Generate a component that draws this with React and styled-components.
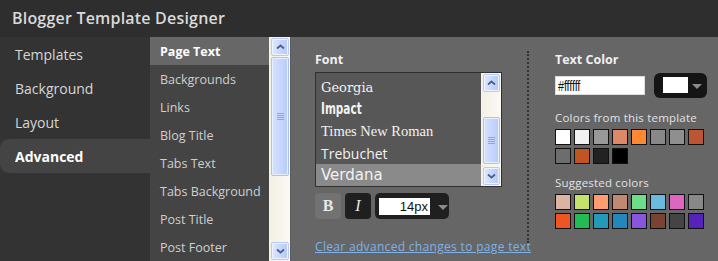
import React from 'react';
import styled, { createGlobalStyle } from 'styled-components';

const Global = createGlobalStyle`
  html, body { margin: 0; padding: 0; background: #313131; }
  body { font-family: "Open Sans", "DejaVu Sans", sans-serif; }
  * { box-sizing: border-box; }
`;

const Page = styled.div`
  width: 718px;
  height: 261px;
  overflow: hidden;
  background: #323232;
  display: flex;
  flex-direction: column;
`;

const Header = styled.header`
  height: 37px;
  flex: none;
  display: flex;
  align-items: center;
  padding: 0 0 2px 12px;
  color: #dadada;
  font-size: 16px;
  font-weight: 600;
  letter-spacing: 0.2px;
  background: #2e2e2e;
`;

const Body = styled.div`
  flex: 1;
  display: flex;
  min-height: 0;
`;

const Nav = styled.nav`
  width: 150px;
  flex: none;
  background: #333;
  display: flex;
  flex-direction: column;
`;

const NavItem = styled.div`
  height: 34px;
  display: flex;
  align-items: center;
  padding-left: 15px;
  font-size: 14px;
  color: ${p => (p.$active ? '#fff' : '#d6d6d6')};
  font-weight: ${p => (p.$active ? 700 : 400)};
  background: ${p => (p.$active ? '#444' : 'transparent')};
  border-radius: 9px 0 0 9px;
`;

const SubPanel = styled.div`
  flex: none;
  display: flex;
  background: #444;
`;

const SubList = styled.ul`
  list-style: none;
  margin: 0;
  padding: 0;
  width: 119px;
`;

const SubItem = styled.li`
  height: 28px;
  display: flex;
  align-items: center;
  padding-left: 10px;
  font-size: 12.5px;
  white-space: nowrap;
  color: ${p => (p.$active ? '#fff' : '#cfcfcf')};
  font-weight: ${p => (p.$active ? 700 : 400)};
  background: ${p => (p.$active ? '#676767' : 'transparent')};
`;

/* XP style scrollbar */
const ScrollBar = styled.div`
  width: ${p => p.$w}px;
  flex: none;
  display: flex;
  flex-direction: column;
  background: linear-gradient(to right, #f3f0e6, #fbf9f3);
  border-left: 1px solid #f4f4f4;
`;

const ScrollBtn = styled.div`
  height: 18px;
  flex: none;
  margin: ${p => (p.$down ? '0 1px 1px' : '1px 1px 0')};
  border: 1px solid #b9cbf3;
  border-radius: 2px;
  background: linear-gradient(to right, #dfe8ff, #c3d4fd 60%, #b7c9f6);
  box-shadow: inset 0 0 0 1px #eef3ff;
  display: flex;
  align-items: center;
  justify-content: center;
`;

const Thumb = styled.div`
  flex: none;
  height: ${p => p.$h}px;
  margin: ${p => p.$top}px 1px 0;
  border: 1px solid #aec2f2;
  border-radius: 2px;
  background: linear-gradient(to right, #d5e1fe, #c4d4fd 60%, #b8caf7);
  box-shadow: inset 0 0 0 1px #e8efff;
  display: flex;
  align-items: center;
  justify-content: center;
`;

const Spacer = styled.div`
  flex: 1;
`;

const Arrow = ({ down }) => (
  <svg width="9" height="6" viewBox="0 0 9 6">
    <path
      d={down ? 'M1 1.5 L4.5 4.5 L8 1.5' : 'M1 4.5 L4.5 1.5 L8 4.5'}
      fill="none"
      stroke="#4d6185"
      strokeWidth="1.8"
    />
  </svg>
);

const Grip = () => (
  <svg width="7" height="8" viewBox="0 0 7 8">
    {[0.5, 2.5, 4.5, 6.5].map(y => (
      <line key={y} x1="0" x2="7" y1={y} y2={y} stroke="#8ea6dc" strokeWidth="1" />
    ))}
  </svg>
);

const Scroller = ({ w, thumbTop, thumbH }) => (
  <ScrollBar $w={w}>
    <ScrollBtn>
      <Arrow />
    </ScrollBtn>
    <Thumb $top={thumbTop} $h={thumbH}>
      <Grip />
    </Thumb>
    <Spacer />
    <ScrollBtn $down>
      <Arrow down />
    </ScrollBtn>
  </ScrollBar>
);

const Main = styled.main`
  flex: 1;
  display: flex;
  background: #666;
  padding: 14px 0 0 24px;
  border-left: 1px solid #5c5c5c;
`;

const FontCol = styled.section`
  width: 212px;
  flex: none;
  display: flex;
  flex-direction: column;
`;

const Label = styled.div`
  height: ${p => p.$h || 22}px;
  display: flex;
  align-items: ${p => (p.$bottom ? 'flex-end' : 'center')};
  padding-bottom: ${p => (p.$bottom ? 4 : 0)}px;
  font-size: ${p => (p.$bold ? 12.5 : 11.5)}px;
  font-weight: ${p => (p.$bold ? 700 : 400)};
  color: ${p => (p.$bold ? '#f0f0f0' : '#e2e2e2')};
  white-space: nowrap;
  letter-spacing: ${p => (p.$bold ? 0 : 0.2)}px;
`;

const ListBox = styled.div`
  margin-top: 5px;
  width: 187px;
  height: 115px;
  border: 1px solid #303030;
  background: #575757;
  display: flex;
`;

const Options = styled.ul`
  list-style: none;
  margin: 0;
  padding: 3px 0 0;
  flex: 1;
`;

const Option = styled.li`
  height: 22px;
  display: flex;
  align-items: center;
  padding-left: 5px;
  color: #f2f2f2;
  font-size: ${p => p.$size || 14}px;
  background: ${p => (p.$sel ? '#8a8a8a' : 'transparent')};
  font-family: ${p => p.$family};
`;

const Condensed = styled.span`
  display: inline-block;
  font-family: "DejaVu Sans", sans-serif;
  font-weight: 700;
  font-size: 15px;
  transform: scaleX(0.7);
  transform-origin: left center;
`;

const StyleRow = styled.div`
  margin-top: 6px;
  display: flex;
  align-items: center;
  gap: 4px;
`;

const StyleBtn = styled.div`
  width: 26px;
  height: 26px;
  border-radius: 4px;
  background: ${p => (p.$on ? '#1f1f1f' : '#727272')};
  color: #e8e8e8;
  display: flex;
  align-items: center;
  justify-content: center;
  font-family: "Liberation Serif", "DejaVu Serif", serif;
  font-size: 16px;
  font-weight: ${p => (p.$bold ? 700 : 400)};
  font-style: ${p => (p.$italic ? 'italic' : 'normal')};
`;

const SizeSelect = styled.div`
  width: 74px;
  height: 26px;
  border-radius: 5px;
  background: #1f1f1f;
  display: flex;
  align-items: center;
  padding-left: 4px;
  gap: 4px;
`;

const SizeInput = styled.div`
  width: 51px;
  height: 17px;
  background: #fff;
  color: #111;
  font-family: "Liberation Sans", Arial, sans-serif;
  font-size: 13px;
  display: flex;
  align-items: center;
  justify-content: flex-end;
  padding-right: 2px;
`;

const Caret = styled.span`
  width: 0;
  height: 0;
  border-left: 5px solid transparent;
  border-right: 5px solid transparent;
  border-top: 5px solid #8c8c8c;
  margin-left: 4px;
  margin-top: 2px;
`;

const ClearLink = styled.a`
  margin-top: 19px;
  font-size: 12px;
  color: #7fb2e6;
  text-decoration: underline;
  white-space: nowrap;
  letter-spacing: 0.32px;
  cursor: pointer;
`;

const Divider = styled.div`
  flex: none;
  width: 2px;
  height: 192px;
  border-left: 2px dotted #333;
`;

const ColorCol = styled.section`
  margin-left: 26px;
  display: flex;
  flex-direction: column;
`;

const PickerRow = styled.div`
  margin-top: 6px;
  display: flex;
  align-items: center;
  gap: 9px;
`;

const HexInput = styled.div`
  width: 90px;
  height: 19px;
  background: #fff;
  border: 1px solid #ddd;
  color: #111;
  font-family: "Liberation Sans", Arial, sans-serif;
  font-size: 14px;
  display: flex;
  align-items: center;
  padding-left: 2px;
`;

const HexText = styled.span`
  display: inline-block;
  transform: scaleX(0.78);
  transform-origin: left center;
  letter-spacing: -0.2px;
`;

const ColorBtn = styled.div`
  width: 53px;
  height: 25px;
  border-radius: 6px;
  background: #151515;
  display: flex;
  align-items: center;
  padding-left: 9px;
`;

const ColorChip = styled.span`
  width: 25px;
  height: 16px;
  background: ${p => p.$c};
  margin-top: -2px;
`;

const Swatches = styled.div`
  display: grid;
  grid-template-columns: repeat(8, 16px);
  gap: 3px;
`;

const Swatch = styled.span`
  width: 16px;
  height: 16px;
  border: 1px solid #111;
  background: ${p => p.$c};
`;

const navItems = ['Templates', 'Background', 'Layout', 'Advanced'];
const subItems = [
  'Page Text',
  'Backgrounds',
  'Links',
  'Blog Title',
  'Tabs Text',
  'Tabs Background',
  'Post Title',
  'Post Footer',
];
const fonts = [
  { name: 'Georgia', family: '"DejaVu Serif", Georgia, serif', size: 13 },
  { name: 'Impact', condensed: true },
  { name: 'Times New Roman', family: '"Liberation Serif", "Times New Roman", serif', size: 14.5 },
  { name: 'Trebuchet', family: '"Open Sans", "Trebuchet MS", sans-serif' },
  { name: 'Verdana', family: '"DejaVu Sans", Verdana, sans-serif', size: 15, sel: true },
];
const templateColors = [
  '#ffffff', '#f2f2f2', '#999999', '#dd8866', '#ff8833', '#888888', '#8f8f8f', '#bb5533',
  '#6d6d6d', '#c05522', '#222222', '#000000',
];
const suggestedColors = [
  '#ddb4a4', '#c6e06c', '#ff9c70', '#c08a72', '#6edd8a', '#6ab9de', '#dd66c0', '#888888',
  '#ee5522', '#22bb55', '#2399bb', '#2288bb', '#8855dd', '#774433', '#444444', '#5522bb',
];

export default function App() {
  return (
    <Page>
      <Global />
      <Header>Blogger Template Designer</Header>
      <Body>
        <Nav>
          {navItems.map(n => (
            <NavItem key={n} $active={n === 'Advanced'}>
              {n}
            </NavItem>
          ))}
        </Nav>
        <SubPanel>
          <SubList>
            {subItems.map((s, i) => (
              <SubItem key={s} $active={i === 0}>
                {s}
              </SubItem>
            ))}
          </SubList>
          <Scroller w={21} thumbTop={1} thumbH={119} />
        </SubPanel>
        <Main>
          <FontCol>
            <Label $bold $h={16}>Font</Label>
            <ListBox>
              <Options>
                {fonts.map(f => (
                  <Option key={f.name} $family={f.family} $size={f.size} $sel={f.sel}>
                    {f.condensed ? <Condensed>{f.name}</Condensed> : f.name}
                  </Option>
                ))}
              </Options>
              <Scroller w={20} thumbTop={25} thumbH={47} />
            </ListBox>
            <StyleRow>
              <StyleBtn $bold>B</StyleBtn>
              <StyleBtn $on $italic>I</StyleBtn>
              <SizeSelect>
                <SizeInput>14px</SizeInput>
                <Caret />
              </SizeSelect>
            </StyleRow>
            <ClearLink>Clear advanced changes to page text</ClearLink>
          </FontCol>
          <Divider />
          <ColorCol>
            <Label $bold $h={16}>Text Color</Label>
            <PickerRow>
              <HexInput>
                <HexText>#ffffff</HexText>
              </HexInput>
              <ColorBtn>
                <ColorChip $c="#ffffff" />
                <Caret />
              </ColorBtn>
            </PickerRow>
            <Label $bottom $h={31}>Colors from this template</Label>
            <Swatches>
              {templateColors.map((c, i) => (
                <Swatch key={i} $c={c} />
              ))}
            </Swatches>
            <Label $bottom $h={30}>Suggested colors</Label>
            <Swatches>
              {suggestedColors.map((c, i) => (
                <Swatch key={i} $c={c} />
              ))}
            </Swatches>
          </ColorCol>
        </Main>
      </Body>
    </Page>
  );
}
